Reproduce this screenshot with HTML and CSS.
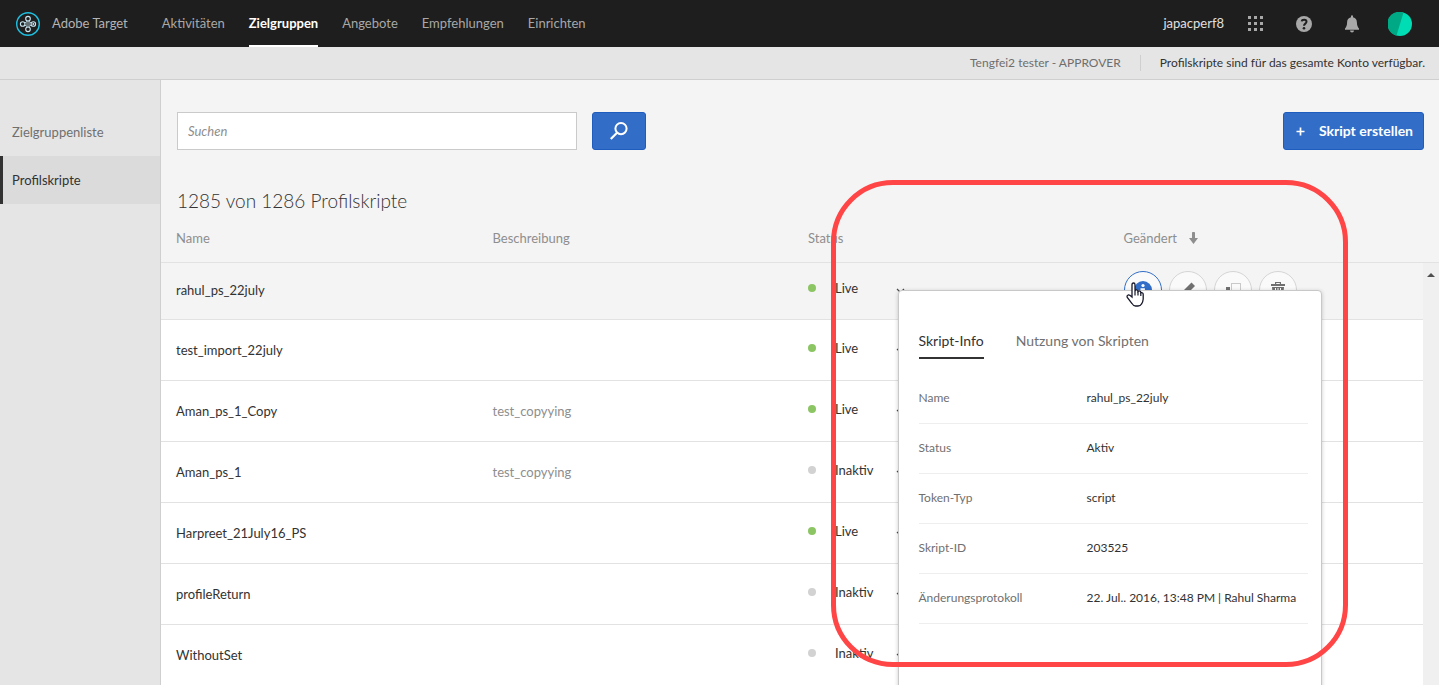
FILE: index.html
```html
<!DOCTYPE html>
<html lang="de">
<head>
<meta charset="utf-8">
<title>Adobe Target – Profilskripte</title>
<link rel="stylesheet" href="styles.css">
</head>
<body>
<header class="topbar">
  <svg class="logo" width="24" height="24" viewBox="0 0 24 24" fill="none">
    <circle cx="12" cy="12" r="11.3" stroke="#1fbfe0" stroke-width="1.4"/>
    <g stroke="#c9e6f2" stroke-width="1.1">
      <circle cx="12" cy="6.700" r="2.300"/><circle cx="12" cy="17.300" r="2.300"/>
      <circle cx="6.700" cy="12" r="2.300"/><circle cx="17.300" cy="12" r="2.300"/>
      <path d="M11 8.800v6.400M13 8.800v6.400" stroke-width=".8"/>
      <path d="M8.800 11L10.500 9.800M8.800 13L10.500 14.200M15.200 11L13.500 9.800M15.200 13L13.500 14.200" stroke-width=".8"/>
    </g>
    <circle cx="17.300" cy="12" r="1" fill="#c9e6f2"/>
  </svg>
  <span class="brand">Adobe Target</span>
  <nav class="nav">
    <a href="#">Aktivitäten</a>
    <a href="#" class="current">Zielgruppen</a>
    <a href="#">Angebote</a>
    <a href="#">Empfehlungen</a>
    <a href="#">Einrichten</a>
  </nav>
  <div class="tools">
    <span class="org">japacperf8</span>
    <button class="tool" aria-label="Lösungen"><svg width="16" height="16" viewBox="0 0 16 16" fill="#a8a8a8"><path d="M0 0h3v3H0zM6 0h3v3H6zM12 0h3v3h-3zM0 6h3v3H0zM6 6h3v3H6zM12 6h3v3h-3zM0 12h3v3H0zM6 12h3v3H6zM12 12h3v3h-3z"/></svg></button>
    <button class="tool" aria-label="Hilfe"><svg width="16" height="16" viewBox="0 0 16 16"><circle cx="8" cy="8" r="8" fill="#a8a8a8"/><path d="M5.700 5.400C6 3.300 10.500 3 10.500 5.800 10.500 7.700 8 7.600 8 9.800" fill="none" stroke="#1e1e1e" stroke-width="2"/><circle cx="8" cy="12.200" r="1.300" fill="#1e1e1e"/></svg></button>
    <button class="tool" aria-label="Benachrichtigungen"><svg width="16" height="18" viewBox="0 0 16 18" fill="#a8a8a8"><path d="M7 .5h2v1.700c2.600.5 3.900 2.500 3.900 5 0 3.300.9 4.900 2.100 6.300v1.200H1v-1.200C2.200 12.100 3.100 10.500 3.100 7.200 3.100 4.700 4.400 2.700 7 2.200zM6 15.600h4a2 1.900 0 0 1-4 0z"/></svg></button>
    <button class="tool" aria-label="Profil"><svg width="24" height="24" viewBox="0 0 24 24"><circle cx="12" cy="12" r="12" fill="#00dcb4"/><path d="M15.500.6A12 12 0 1 0 8.500 23.500z" fill="#00a986"/></svg></button>
  </div>
</header>

<div class="subbar">
  <span class="role">Tengfei2 tester - APPROVER</span>
  <span class="scope">Profilskripte sind für das gesamte Konto verfügbar.</span>
</div>

<div class="body">
  <nav class="sidebar">
    <a href="#">Zielgruppenliste</a>
    <a href="#" class="active">Profilskripte</a>
  </nav>

  <main class="main">
    <div class="actionbar">
      <input class="search" type="text" placeholder="Suchen" aria-label="Suchen">
      <button class="btn btn-search" aria-label="Suche starten"><svg width="18" height="18" viewBox="0 0 18 18" fill="none" stroke="#fff"><circle cx="11" cy="6.600" r="5.600" stroke-width="2"/><path d="M7 10.800.8 17" stroke-width="2.200"/></svg></button>
      <button class="btn btn-create"><svg width="9" height="9" viewBox="0 0 9 9"><path d="M4.500 0.500v8M.5 4.500h8" stroke="#fff" stroke-width="1.700"/></svg>Skript erstellen</button>
    </div>
    <h1 class="title">1285 von 1286 Profilskripte</h1>

    <div class="list">
      <table class="scripts">
        <thead>
          <tr><th>Name</th><th>Beschreibung</th><th>Status</th><th>Geändert<svg class="sort" width="9" height="12" viewBox="0 0 9 12"><path d="M3 .8Q3 0 3.800 0H5.200Q6 0 6 .8V6H9L4.500 12 0 6H3z" fill="#8e8e8e"/></svg></th></tr>
        </thead>
        <tbody>
          <tr class="hovered">
            <td>rahul_ps_22july</td><td></td>
            <td><div class="status"><i class="dot live"></i><select aria-label="Status"><option>Live</option></select><svg class="chev" width="9" height="6" viewBox="0 0 9 6"><path d="M1 1l3.500 3.500L8 1"/></svg></div></td>
            <td class="actions-cell">
              <div class="row-actions">
                <button class="round info" aria-label="Info"><svg width="18" height="18" viewBox="0 0 18 18"><circle cx="9" cy="9" r="9" fill="#326ec8"/><circle cx="9" cy="4.500" r="1.600" fill="#fff"/><path d="M6.500 8.300H9.800V13" fill="none" stroke="#fff" stroke-width="2.200"/></svg></button>
                <button class="round" aria-label="Bearbeiten"><svg width="16" height="18" viewBox="0 0 16 18" fill="#707070"><path d="M11.500 1.500l3.500 3.500-9.500 9.500-4.500 1.500 1-5z"/></svg></button>
                <button class="round" aria-label="Kopieren"><svg width="16" height="16" viewBox="0 0 16 16"><path d="M1 5h4v10H1z" fill="#707070"/><path d="M6.500 1.500h9v11h-9z" fill="none" stroke="#999" stroke-dasharray="1 1"/></svg></button>
                <button class="round" aria-label="Löschen"><svg width="14" height="16" viewBox="0 0 14 16" fill="#707070"><path d="M4 0h6v2h4v2H0V2h4zM5.200 1v1h3.600V1zM1 5h12l-1 11H2z"/><path d="M4.500 6v8M7 6v8M9.500 6v8" stroke="#fff"/></svg></button>
                <section class="popover" aria-label="Skriptdetails">
                  <div class="tabs" role="tablist">
                    <button class="tab selected" role="tab" aria-selected="true">Skript-Info</button>
                    <button class="tab" role="tab" aria-selected="false">Nutzung von Skripten</button>
                  </div>
                  <dl class="details">
                    <div><dt>Name</dt><dd>rahul_ps_22july</dd></div>
                    <div><dt>Status</dt><dd>Aktiv</dd></div>
                    <div><dt>Token-Typ</dt><dd>script</dd></div>
                    <div><dt>Skript-ID</dt><dd>203525</dd></div>
                    <div><dt>Änderungsprotokoll</dt><dd>22. Jul.. 2016, 13:48 PM | Rahul Sharma</dd></div>
                  </dl>
                </section>
                <svg class="cursor" width="18" height="25" viewBox="0 0 18 25"><path d="M6 15V2.800Q6 1 7.500 1 9 1 9 2.800V9Q9.500 7.500 11 8 12 8.300 12 9.500 13 8.500 14.200 9.300 14.800 9.800 14.800 10.800 17.200 10.300 17.200 12.500V17Q17 20 15.500 22 14.500 24 12 24H9.500Q7.500 24 6 21.500L1.300 15.500Q.5 13.500 2.200 13 3.500 12.700 6 15z" fill="#fff" stroke="#16182a" stroke-width="1.300"/><path d="M9 9v4.500M12 9.500v4M14.800 11v3" stroke="#16182a" stroke-width="1.200"/></svg>
              </div>
            </td>
          </tr>
          <tr><td>test_import_22july</td><td></td><td><div class="status"><i class="dot live"></i><select aria-label="Status"><option>Live</option></select><svg class="chev" width="9" height="6" viewBox="0 0 9 6"><path d="M1 1l3.500 3.500L8 1"/></svg></div></td><td></td></tr>
          <tr><td>Aman_ps_1_Copy</td><td class="desc">test_copyying</td><td><div class="status"><i class="dot live"></i><select aria-label="Status"><option>Live</option></select><svg class="chev" width="9" height="6" viewBox="0 0 9 6"><path d="M1 1l3.500 3.500L8 1"/></svg></div></td><td></td></tr>
          <tr><td>Aman_ps_1</td><td class="desc">test_copyying</td><td><div class="status"><i class="dot"></i><select aria-label="Status"><option>Inaktiv</option></select><svg class="chev" width="9" height="6" viewBox="0 0 9 6"><path d="M1 1l3.500 3.500L8 1"/></svg></div></td><td></td></tr>
          <tr><td>Harpreet_21July16_PS</td><td></td><td><div class="status"><i class="dot live"></i><select aria-label="Status"><option>Live</option></select><svg class="chev" width="9" height="6" viewBox="0 0 9 6"><path d="M1 1l3.500 3.500L8 1"/></svg></div></td><td></td></tr>
          <tr><td>profileReturn</td><td></td><td><div class="status"><i class="dot"></i><select aria-label="Status"><option>Inaktiv</option></select><svg class="chev" width="9" height="6" viewBox="0 0 9 6"><path d="M1 1l3.500 3.500L8 1"/></svg></div></td><td></td></tr>
          <tr><td>WithoutSet</td><td></td><td><div class="status"><i class="dot"></i><select aria-label="Status"><option>Inaktiv</option></select><svg class="chev" width="9" height="6" viewBox="0 0 9 6"><path d="M1 1l3.500 3.500L8 1"/></svg></div></td><td></td></tr>
        </tbody>
      </table>
      <div class="scrollbar"><svg width="8" height="4" viewBox="0 0 8 4"><path d="M4 0l4 4H0z" fill="#505050"/></svg></div>
    </div>
    <div class="callout"></div>
  </main>
</div>
</body>
</html>
```
FILE: styles.css
```css
* { box-sizing: border-box; }
body {
  margin: 0;
  height: 100vh;
  display: flex;
  flex-direction: column;
  overflow: hidden;
  background: #f4f4f4;
  color: #323232;
  font: 13px/20px Lato, "Noto Sans", sans-serif;
}
button, input, select { font: inherit; color: inherit; }
button { cursor: pointer; }
a { text-decoration: none; color: inherit; }

.topbar {
  flex: none;
  display: flex;
  align-items: center;
  height: 47px;
  padding: 0 27px 0 16px;
  background: #1e1e1e;
  color: #a8a8a8;
}
.logo { margin-right: 12px; }
.brand { margin-right: 34px; padding-bottom: 2px; color: #b4b4b4; }
.nav { display: flex; gap: 24px; height: 100%; }
.nav a { display: flex; align-items: center; border-bottom: 2px solid transparent; }
.nav .current { color: #fff; font-weight: 700; border-bottom-color: #fff; }
.tools { display: flex; align-items: center; gap: 32px; margin-left: auto; }
.org { margin-right: -8px; padding-bottom: 2px; color: #e0e0e0; }
.tool { display: flex; padding: 0; border: 0; background: none; }
.tool:last-child { margin-left: -4px; }

.subbar {
  flex: none;
  display: flex;
  align-items: center;
  justify-content: flex-end;
  height: 33px;
  padding-right: 14px;
  background: #e5e5e5;
  border-bottom: 1px solid #cfcfcf;
  font-size: 12px;
}
.role { padding-right: 19px; border-right: 1px solid #cfcfcf; color: #6e6e6e; line-height: 16px; }
.scope { padding-left: 19px; }

.body { flex: 1; display: flex; min-height: 0; }
.sidebar {
  flex: none;
  width: 161px;
  padding-top: 28px;
  background: #e5e5e5;
  border-right: 1px solid #cfcfcf;
}
.sidebar a { display: block; padding-left: 9px; border-left: 3px solid transparent; line-height: 48px; color: #707070; }
.sidebar .active { background: #dbdbdb; border-left-color: #323232; color: #323232; }

.main { flex: 1; min-width: 0; position: relative; }
.actionbar { display: flex; padding: 32px 15px 0 16px; height: 70px; }
.search {
  width: 400px;
  padding: 0 10px;
  margin-right: 15px;
  border: 1px solid #cacaca;
  background: #fff;
}
.search::placeholder { color: #8e8e8e; font-style: italic; opacity: 1; }
.btn {
  display: flex;
  align-items: center;
  justify-content: center;
  border: 1px solid #1e5cbe;
  border-radius: 3px;
  background: #326ec8;
  color: #fff;
}
.btn-search { width: 54px; }
.btn-create { margin-left: auto; padding: 0 10px 0 12px; gap: 14px; font-weight: 700; font-size: 14px; }
.title { margin: 37px 0 0; padding-left: 16px; font-size: 19px; line-height: 28px; font-weight: 300; }

.list { display: flex; overflow: hidden; }
.scripts { flex: 1; border-collapse: collapse; table-layout: fixed; }
.scripts th, .scripts td { width: 25%; padding: 0 0 0 16px; text-align: left; border-bottom: 1px solid #e2e2e2; }
.scripts th:first-child, .scripts td:first-child { padding-left: 15px; }
.scripts th { height: 47px; font-weight: 400; color: #8e8e8e; }
.sort { margin-left: 12px; vertical-align: -1px; }
.scripts td { height: 61px; background: #fff; }
.scripts .hovered td { height: 57px; padding-bottom: 2px; background: #f4f4f4; }
.scripts .hovered .actions-cell { padding-top: 8px; vertical-align: top; }
.scripts .desc { color: #8e8e8e; }
.status { display: flex; align-items: center; padding-bottom: 4px; }
.dot { width: 8px; height: 8px; margin-right: 19px; border-radius: 50%; background: #d2d2d2; }
.dot.live { background: #8cc563; }
.status select { appearance: none; width: 60px; padding: 0; border: 0; background: none; }
.chev { fill: none; stroke: #4b4b4b; stroke-width: 1.200; margin: 6px 0 0 1px; }

.row-actions { position: relative; display: flex; gap: 7px; }
.round {
  display: flex;
  align-items: center;
  justify-content: center;
  width: 38px;
  height: 38px;
  padding: 0;
  border: 1px solid #d5d5d5;
  border-radius: 50%;
  background: #fafafa;
}
.round.info { border-color: #326ec8; }

.popover {
  position: absolute;
  top: 19px;
  left: -226px;
  z-index: 2;
  width: 424px;
  height: 440px;
  padding: 36px 13px 0 20px;
  border: 1px solid #c8c8c8;
  border-radius: 4px;
  background: #fff;
  box-shadow: 0 1px 4px rgba(0, 0, 0, .2);
}
.tabs { display: flex; gap: 32px; font-size: 14px; }
.tab { padding: 4px 0 6px; border: 0; border-bottom: 2px solid transparent; background: none; color: #707070; line-height: 20px; }
.tab.selected { color: #323232; border-color: #323232; }
.details { margin: 15px 0 0; font-size: 12px; }
.details div { display: flex; height: 50px; align-items: center; border-bottom: 1px solid #eee; }
.details dt { flex: none; width: 168px; color: #707070; }
.details dd { margin: 0; }
.cursor { position: absolute; left: 2px; top: 11px; z-index: 3; }

.scrollbar {
  flex: none;
  width: 16px;
  margin-top: 47px;
  padding-top: 7px;
  border-top: 1px solid #e2e2e2;
  background: #f0f0f0;
  text-align: center;
  line-height: 4px;
}
.callout {
  position: absolute;
  z-index: 4;
  top: 100px;
  right: 91px;
  width: 517px;
  height: 487px;
  border: 5px solid #ff4545;
  border-radius: 62px;
  pointer-events: none;
}
```
